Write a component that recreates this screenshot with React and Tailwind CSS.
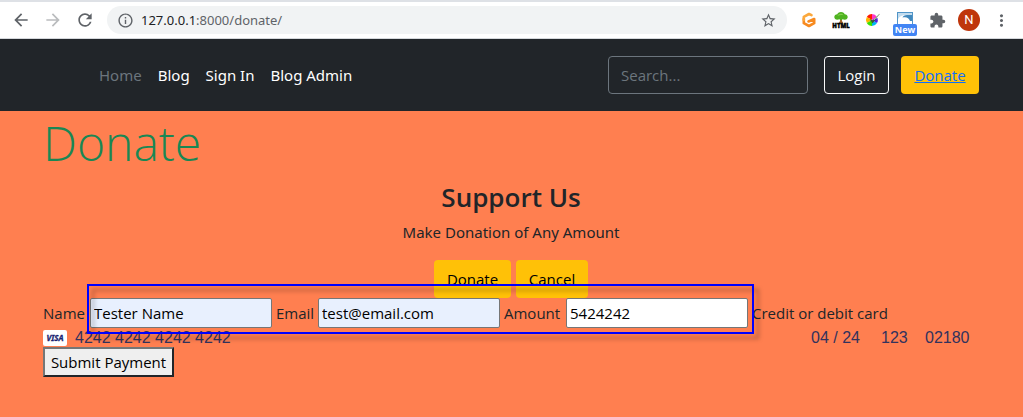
import React from "react";
import {
  MdArrowBack,
  MdArrowForward,
  MdRefresh,
  MdInfoOutline,
  MdStarBorder,
  MdExtension,
  MdMoreVert,
} from "react-icons/md";

function GIcon() {
  return (
    <svg width="16" height="16" viewBox="0 0 16 16" fill="none" aria-hidden="true">
      <path d="M2.800 7v4.200L8 14l5.200-2.800V7L7.500 9.500" stroke="#f78a1f" strokeWidth="2.600" strokeLinejoin="round" strokeLinecap="round" />
      <path d="M10.500 3.200 8 2 2.800 4.800V8" stroke="#fba83c" strokeWidth="2.600" strokeLinejoin="round" strokeLinecap="round" />
    </svg>
  );
}

function TreeIcon() {
  return (
    <svg width="18" height="18" viewBox="0 0 18 18" aria-hidden="true">
      <path d="M8 6h2v4l1.500 2.500h-5L8 10z" fill="#a5622a" />
      <path d="M9 1c2.200 0 3.400 1 3.700 2.300 1.800 0 3 1.200 3 2.700s-1.200 2.700-3 2.700L10.500 8.200 9 9.500 7.500 8.200l-2.200.5c-1.800 0-3-1.200-3-2.700s1.200-2.700 3-2.700C5.600 2 6.800 1 9 1z" fill="#4fb321" />
      <path d="M5.500 5c1-2.500 4.500-3 6-.8-2.500-.4-4-.2-6 .8z" fill="#83d04c" />
      <text x="9" y="16.500" textAnchor="middle" stroke="#000" strokeWidth="0.4" className="fill-black font-['Open_Sans',sans-serif] text-[6px] font-extrabold">HTML</text>
    </svg>
  );
}

function ColorWheelIcon() {
  return (
    <svg width="16" height="16" viewBox="0 0 16 16" aria-hidden="true">
      <path d="M7 8V2a6 6 0 0 1 5 3z" fill="#ff36c9" />
      <path d="M7 8V2a6 6 0 0 0-5.200 3z" fill="#ff1a00" />
      <path d="M7 8 1.800 5a6 6 0 0 0 0 6z" fill="#ffb400" />
      <path d="M7 8l-5.200 3A6 6 0 0 0 7 14z" fill="#38e000" />
      <path d="M7 8v6a6 6 0 0 0 5-3z" fill="#00b8f0" />
      <path d="M7 8l5 3a6 6 0 0 0 .5-5z" fill="#4a20e8" />
      <path d="M4.500 7 7.500 11.500l7.500-10-7.200 6.700z" fill="#3c5a34" />
      <path d="m9 8 5.500-6" stroke="#a9c69c" strokeWidth="1" />
    </svg>
  );
}

function CaptureIcon() {
  return (
    <svg width="18" height="18" viewBox="0 0 18 18" aria-hidden="true">
      <rect x="1.500" y="1.500" width="15" height="14" fill="#fff" stroke="#5095c8" />
      <path d="M2 2h14v2H10C6 4 3.500 5.500 2 8z" fill="#c3dcee" />
      <path d="M16 10V4H11C8.500 4 7 5 6.500 6.500c3.500-1 6.500 0 7.500 3.500z" fill="#4289bd" />
    </svg>
  );
}

function VisaIcon() {
  return (
    <svg width="24" height="16" viewBox="0 0 24 16" role="img" aria-label="Visa">
      <rect width="24" height="16" rx="2" fill="#fff" />
      <text x="12" y="11" textAnchor="middle" stroke="#1a1f71" strokeWidth="0.3" className="fill-[#1a1f71] font-['Noto_Sans',sans-serif] text-[8px] font-bold italic">VISA</text>
    </svg>
  );
}

const iconButton = "flex size-8 shrink-0 items-center justify-center";

function BrowserBar() {
  return (
    <header className="flex h-[39px] items-center border-t-2 border-b border-t-[#dee1e6] border-b-[#d5d8dc] bg-white pl-[5px] pr-1.5 text-[#5f6368]">
      <button type="button" aria-label="Back" className={iconButton}><MdArrowBack size={20} /></button>
      <button type="button" aria-label="Forward" className={`${iconButton} text-[#babcbe]`}><MdArrowForward size={20} /></button>
      <button type="button" aria-label="Reload" className={iconButton}><MdRefresh size={20} /></button>
      <div className="ml-1.5 mr-1.5 flex h-7 min-w-0 flex-1 items-center rounded-full bg-[#f1f3f4] pl-2.5 pr-2.5">
        <MdInfoOutline size={17} />
        <span className="flex-1 pl-[7px] font-['Noto_Sans',sans-serif] text-[13px] leading-5">
          <span className="text-[#202124]">127.0.0.1</span>:8000/donate/
        </span>
        <button type="button" aria-label="Bookmark"><MdStarBorder size={17} /></button>
      </div>
      <button type="button" aria-label="G extension" className={iconButton}><GIcon /></button>
      <button type="button" aria-label="HTML tree extension" className={iconButton}><TreeIcon /></button>
      <button type="button" aria-label="Color picker" className={iconButton}><ColorWheelIcon /></button>
      <button type="button" aria-label="Screen capture" className={`${iconButton} relative`}>
        <CaptureIcon />
        <span className="absolute inset-x-1 bottom-0 h-3 rounded-xs bg-[#4285f4] text-center font-['Open_Sans',sans-serif] text-[9px] leading-3 font-bold text-white">New</span>
      </button>
      <button type="button" aria-label="Extensions" className={iconButton}><MdExtension size={17} /></button>
      <button type="button" aria-label="Profile" className={iconButton}>
        <span className="size-[22px] rounded-full bg-[#bf360c] text-center font-['Roboto',sans-serif] text-[13px] leading-[22px] text-white">N</span>
      </button>
      <button type="button" aria-label="Menu" className={iconButton}><MdMoreVert size={19} /></button>
    </header>
  );
}

function SiteNav() {
  return (
    <div className="bg-[#212529] py-[17px]">
      <div className="mx-auto flex max-w-[961px] items-center pl-3 pr-[13px]">
        <nav className="mr-auto flex gap-4 pl-14 font-['Noto_Sans',sans-serif] text-white">
          <a href="#home" className="text-[#6c757d]">Home</a>
          <a href="#blog">Blog</a>
          <a href="#signin">Sign In</a>
          <a href="#admin">Blog Admin</a>
        </nav>
        <input
          type="search"
          aria-label="Search"
          placeholder="Search..."
          className="h-[38px] w-[200px] rounded border border-[#6c757d] bg-[#212529] px-3 text-white placeholder:text-[#6c757d]"
        />
        <button type="button" className="ml-4 h-[38px] w-[65px] rounded border border-[#f8f9fa] text-[#f8f9fa]">Login</button>
        <a href="#donate" className="ml-3 flex h-[38px] w-[78px] items-center justify-center rounded bg-[#ffc107] text-[#0d6efd] underline">Donate</a>
      </div>
    </div>
  );
}

function Field({ id, label, type, value, fill, labelWidth }) {
  return (
    <div className="flex items-center gap-1">
      <label htmlFor={id} className={labelWidth}>{label}</label>
      <input id={id} type={type} defaultValue={value} className={`h-[30px] w-[182px] rounded-xs border border-[#767676] px-[3px] text-black ${fill}`} />
    </div>
  );
}

function DonationForm() {
  return (
    <form className="relative" onSubmit={(e) => e.preventDefault()}>
      <div className="flex flex-wrap items-center gap-x-1">
        <Field id="name" label="Name" type="text" value="Tester Name" fill="bg-[#e8f0fe]" labelWidth="w-[43px]" />
        <Field id="email" label="Email" type="email" value="test@email.com" fill="bg-[#e8f0fe]" labelWidth="w-[38px]" />
        <Field id="amount" label="Amount" type="text" value="5424242" fill="bg-white" labelWidth="w-[58px]" />
        <label htmlFor="card">Credit or debit card</label>
      </div>
      <div className="flex h-[19px] items-center font-['Liberation_Sans',sans-serif] text-[16px] text-[#32325d]">
        <VisaIcon />
        <input id="card" defaultValue="4242 4242 4242 4242" className="ml-2 min-w-0 flex-1 bg-transparent" />
        <input aria-label="Expiry date" defaultValue="04 / 24" className="w-[70px] bg-transparent" />
        <input aria-label="Security code" defaultValue="123" className="w-11 bg-transparent" />
        <input aria-label="Postal code" defaultValue="02180" className="w-[54px] bg-transparent" />
      </div>
      <button type="submit" className="block h-[30px] w-[131px] border-2 border-t-[#767676] border-l-[#767676] border-r-[#212529] border-b-[#212529] bg-[#efefef] leading-6 text-black">
        Submit Payment
      </button>
      <div className="pointer-events-none absolute -top-3.5 left-11 h-[50px] w-[667px] border-2 border-[#0000ff] drop-shadow-[5px_5px_2px_rgba(0,0,0,0.3)]" />
    </form>
  );
}

export default function App() {
  return (
    <div className="min-h-screen bg-[#ff7f50] font-['Open_Sans','Noto_Sans',sans-serif] text-[15px] leading-6 text-[#212529]">
      <BrowserBar />
      <SiteNav />
      <main className="mx-auto max-w-[961px] pl-3 pr-[13px]">
        <h1 className="pt-0.5 text-[48px] leading-[60px] font-light text-[#198754]">Donate</h1>
        <section className="flex flex-col items-center pt-[7px]">
          <h2 className="text-[26px] leading-[34px] font-semibold">Support Us</h2>
          <p className="mt-1.5 font-['Noto_Sans',sans-serif]">Make Donation of Any Amount</p>
          <div className="mt-4 flex gap-[5px] text-black">
            <button type="button" className="h-[38px] w-[77px] rounded bg-[#ffc107]">Donate</button>
            <button type="button" className="h-[38px] w-[72px] rounded bg-[#ffc107]">Cancel</button>
          </div>
        </section>
        <DonationForm />
      </main>
    </div>
  );
}
